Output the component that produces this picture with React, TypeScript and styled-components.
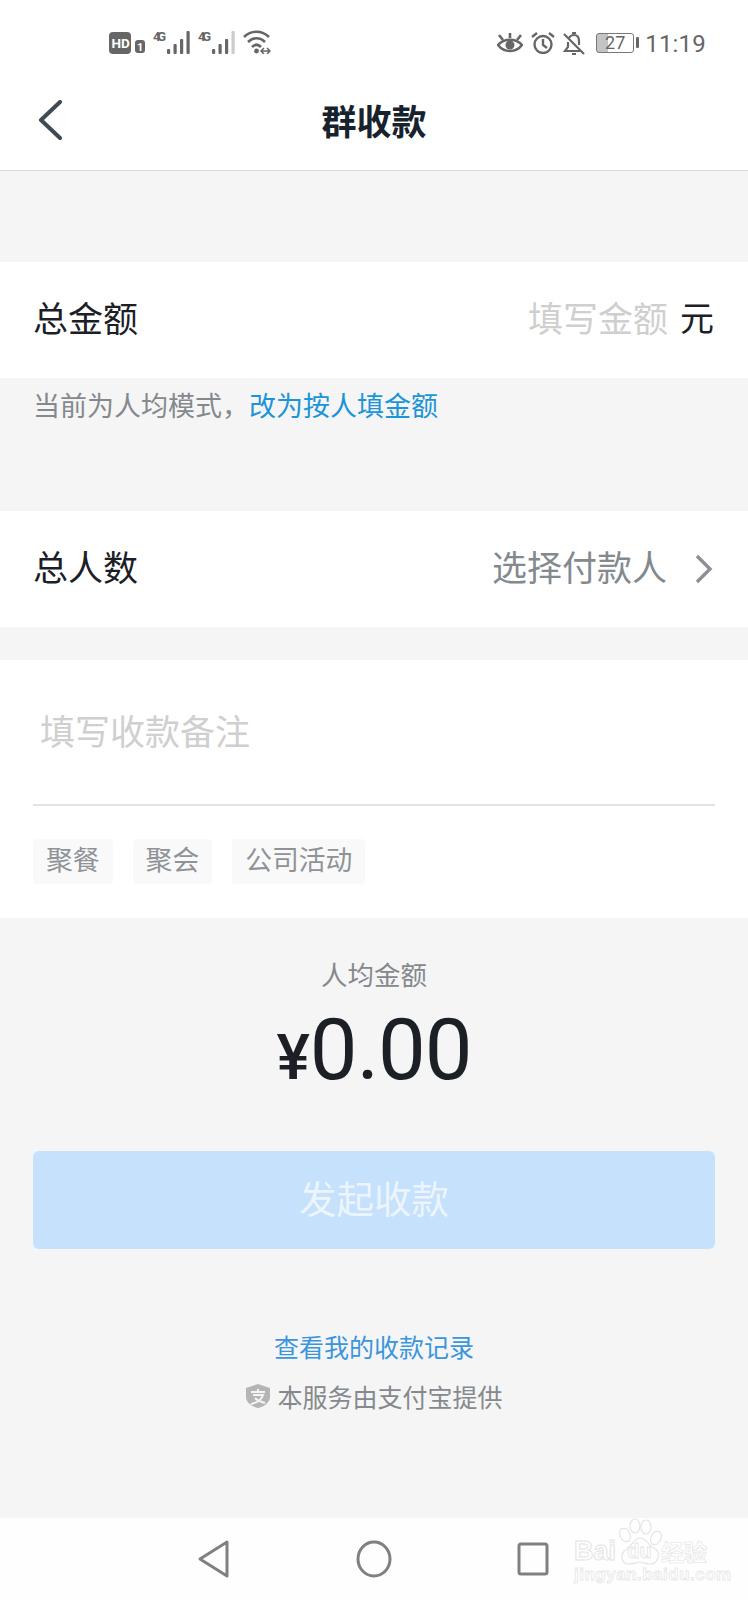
import React from "react";
import styled, { createGlobalStyle } from "styled-components";

const GlobalStyle = createGlobalStyle`
  html, body {
    margin: 0;
    padding: 0;
    background: #f5f5f5;
  }
  * {
    box-sizing: border-box;
  }
`;

const cjk = `"Noto Sans CJK SC", "Noto Sans", sans-serif`;

const Page = styled.div`
  width: 748px;
  height: 1600px;
  display: flex;
  flex-direction: column;
  background: #f5f5f5;
  font-family: ${cjk};
  color: #1c2026;
`;

const StatusBar = styled.div`
  height: 86px;
  background: #fff;
  display: flex;
  justify-content: space-between;
  padding: 30px 42px 0 109px;
`;

const StatusGroup = styled.div<{ $gap: number; $top?: number }>`
  display: flex;
  align-items: flex-start;
  gap: ${(p) => p.$gap}px;
  padding-top: ${(p) => p.$top ?? 0}px;
  color: #666;
`;

const Clock = styled.span`
  margin-top: -1px;
  font-family: Roboto, sans-serif;
  font-size: 24px;
  line-height: 26px;
  letter-spacing: 0.2px;
  color: #666;
`;

const Header = styled.div`
  height: 85px;
  background: #fff;
  border-bottom: 1px solid #d9d9d9;
  position: relative;
  display: flex;
  align-items: center;
  justify-content: center;
  padding-bottom: 16px;
`;

const BackButton = styled.svg`
  position: absolute;
  left: 37px;
  top: 14px;
`;

const Title = styled.h1`
  margin: 0;
  font-size: 35px;
  line-height: 48px;
  font-weight: 700;
  color: #17222c;
`;

const Row = styled.div<{ $top: number }>`
  margin-top: ${(p) => p.$top}px;
  height: 116px;
  background: #fff;
  display: flex;
  align-items: center;
  justify-content: space-between;
  padding: 0 34px 8px 33px;
`;

const RowLabel = styled.span`
  font-size: 35px;
  color: #1c2026;
`;

const RowRight = styled.div<{ $gap: number }>`
  display: flex;
  align-items: center;
  gap: ${(p) => p.$gap}px;
`;

const RowValue = styled.span<{ $muted?: boolean }>`
  font-size: 35px;
  color: ${(p) => (p.$muted ? "#84898e" : "#cfcfcf")};
`;

const Unit = styled.span`
  font-size: 34px;
  color: #1c2026;
`;

const Chevron = styled.svg`
  margin-top: 8px;
`;

const Hint = styled.div`
  height: 60px;
  display: flex;
  align-items: center;
  padding: 0 0 8px 33px;
  font-size: 27px;
  color: #85898d;
`;

const HintLink = styled.span`
  color: #1c94d8;
`;

const NoteCard = styled.div`
  margin-top: 33px;
  height: 258px;
  background: #fff;
  padding: 0 33px;
`;

const NoteInput = styled.div`
  height: 146px;
  border-bottom: 2px solid #e3e3e3;
  padding: 45px 7px 0;
  font-size: 35px;
  line-height: 50px;
  color: #cfcfcf;
`;

const Chips = styled.div`
  display: flex;
  gap: 20px;
  margin-top: 33px;
`;

const Chip = styled.span`
  height: 45px;
  padding: 0 13px;
  background: #f9f9f9;
  border-radius: 4px;
  font-size: 26.8px;
  line-height: 39px;
  color: #8f9397;
`;

const Summary = styled.div`
  display: flex;
  flex-direction: column;
  align-items: center;
  padding-top: 36px;
`;

const SummaryLabel = styled.div`
  font-size: 26.5px;
  line-height: 40px;
  color: #85898d;
`;

const Amount = styled.div`
  margin-top: 11px;
  height: 90px;
  display: flex;
  align-items: baseline;
  font-family: Roboto, sans-serif;
  font-size: 85px;
  line-height: 90px;
  letter-spacing: -1px;
  color: #1c2026;
`;

const Yen = styled.span`
  font-size: 63px;
  font-weight: 500;
  margin-right: 1px;
`;

const SubmitButton = styled.button`
  margin: 56px 33px 0;
  align-self: stretch;
  height: 98px;
  border: none;
  border-radius: 6px;
  background: #c5e1fb;
  font-family: ${cjk};
  font-size: 37.5px;
  padding: 0 0 8px;
  color: #ecf5fd;
`;

const RecordLink = styled.div`
  margin-top: 77px;
  font-size: 25px;
  line-height: 40px;
  color: #3b95dd;
`;

const Provider = styled.div`
  margin-top: 10px;
  display: flex;
  align-items: center;
  gap: 6px;
  font-size: 25px;
  line-height: 40px;
  color: #85898d;
`;

const NavBar = styled.div`
  margin-top: auto;
  height: 82px;
  background: #fefefe;
  position: relative;
  display: flex;
  align-items: center;
  padding: 0 0 0 198px;
`;

const NavSlot = styled.div<{ $width: number }>`
  width: ${(p) => p.$width}px;
  display: flex;
`;

const Watermark = styled.div`
  position: absolute;
  left: 574px;
  top: 0;
  width: 136px;
  color: #fff;
  font-family: "Liberation Sans", sans-serif;
`;

const WatermarkPaw = styled.svg`
  position: absolute;
  left: 44px;
  top: 0;
`;

const WatermarkBrand = styled.div`
  position: relative;
  display: flex;
  align-items: center;
  margin-top: 19px;
  height: 28px;
  font-size: 27px;
  line-height: 28px;
  font-weight: 700;
  -webkit-text-stroke: 1px #e4e4e4;
`;

const WatermarkDu = styled.span`
  width: 41px;
  margin-left: 3px;
  font-size: 20px;
  text-align: center;
  -webkit-text-stroke: 0.8px #e4e4e4;
`;

const WatermarkCn = styled.span`
  font-family: ${cjk};
  font-size: 23px;
  margin-left: 1px;
  -webkit-text-stroke: 0.6px #e4e4e4;
`;

const WatermarkUrl = styled.div`
  margin-top: 0;
  font-size: 17px;
  line-height: 20px;
  letter-spacing: 0.5px;
  font-weight: 700;
  white-space: nowrap;
  color: #fff;
  -webkit-text-stroke: 0.8px #e8e8e8;
`;

const HdIcon = () => (
  <svg width="36" height="24" viewBox="0 0 36 24">
    <rect x="0" y="2" width="22" height="22" rx="4" fill="#666" />
    <text x="2.5" y="18" fontFamily="Roboto, sans-serif" fontSize="13.5" fontWeight="700" fill="#fff">
      HD
    </text>
    <rect x="26" y="10" width="10" height="13" rx="3" fill="#666" />
    <text x="28" y="21" fontFamily="Roboto, sans-serif" fontSize="11" fontWeight="700" fill="#fff">
      1
    </text>
  </svg>
);

const Signal = ({ faded }: { faded?: boolean }) => (
  <svg width="37" height="24" viewBox="0 0 37 24">
    <text x="0" y="11" fontFamily="Roboto, sans-serif" fontSize="13" fontWeight="700" fill="#666" textLength="13">
      4G
    </text>
    <rect x="14" y="19" width="3.2" height="5" rx="1" fill="#666" />
    <rect x="20.5" y="14" width="3.2" height="10" rx="1" fill="#666" />
    <rect x="27" y="9" width="3.2" height="15" rx="1" fill="#666" />
    <rect x="33.5" y="1" width="3.2" height="23" rx="1" fill={faded ? "#ccc" : "#666"} />
  </svg>
);

const WifiIcon = () => (
  <svg width="28" height="24" viewBox="0 0 28 24" fill="none" stroke="#666" strokeWidth="2.6">
    <path d="M1 7 C8 0 19 0 26 7" />
    <path d="M5 12 C10 7 17 7 22 12" />
    <path d="M9 17 C12 14 15 14 18 17" />
    <circle cx="13.5" cy="21" r="2.4" fill="#666" stroke="none" />
    <path d="M18 21h9M21 18l-3 3 3 3M24 18l3 3-3 3" strokeWidth="1.5" />
  </svg>
);

const EyeIcon = () => (
  <svg width="26" height="22" viewBox="0 0 26 22" fill="none" stroke="#666" strokeWidth="2.6">
    <path d="M1 13 C7 6 19 6 25 13 C19 21 7 21 1 13 Z" />
    <circle cx="13" cy="13" r="4.5" fill="#666" stroke="none" />
    <path d="M2 3l4 5M13 1v5M24 3l-4 5" />
  </svg>
);

const AlarmIcon = () => (
  <svg width="24" height="22" viewBox="0 0 24 22" fill="none" stroke="#666" strokeWidth="2.4">
    <circle cx="12" cy="12.5" r="8.5" />
    <path d="M12 7v6l4 3M1 5l5-4M23 5l-5-4" />
  </svg>
);

const BellOffIcon = () => (
  <svg width="22" height="24" viewBox="0 0 22 24" fill="none" stroke="#666" strokeWidth="2.2">
    <path d="M6 6 C7 4 9 3 11 3 C14 3 16 5 16 9 V13 M5 10 V15 L2 19 H17" />
    <path d="M9 22h4M9 1h4M1 2l20 20" />
  </svg>
);

const BatteryBox = styled.div`
  width: 38px;
  height: 20px;
  margin: 1px 3px 0 3px;
  border: 1.5px solid #777;
  border-radius: 3px;
  position: relative;
  font-family: Roboto, sans-serif;
  font-size: 18px;
  line-height: 17px;
  text-align: center;
  color: #666;
  background: linear-gradient(90deg, #c4c4c4 0 30%, transparent 30%);
  &::after {
    content: "";
    position: absolute;
    right: -6px;
    top: 3px;
    width: 3px;
    height: 11px;
    border-radius: 1px;
    background: #666;
  }
`;

const AlipayShield = () => (
  <svg width="26" height="26" viewBox="0 0 26 26">
    <path d="M13 1 L25 5 V14 C25 20 18 24 13 25 C8 24 1 20 1 14 V5 Z" fill="#b5b5b5" />
    <path d="M6 9h14M13 6v4M8 12h10C16 18 11 20 6 21M10 15c3 3 6 4 10 5" fill="none" stroke="#f5f5f5" strokeWidth="2" />
  </svg>
);

const App: React.FC = () => {
  return (
    <>
      <GlobalStyle />
      <Page>
        <StatusBar>
          <StatusGroup $gap={8}>
            <HdIcon />
            <Signal />
            <Signal faded />
            <WifiIcon />
          </StatusGroup>
          <StatusGroup $gap={8} $top={2}>
            <EyeIcon />
            <AlarmIcon />
            <BellOffIcon />
            <BatteryBox>27</BatteryBox>
            <Clock>11:19</Clock>
          </StatusGroup>
        </StatusBar>
        <Header>
          <BackButton width="26" height="40" viewBox="0 0 26 40" fill="none" stroke="#3f4a52" strokeWidth="4" strokeLinecap="round" strokeLinejoin="round">
            <path d="M23 2 L4 20 L23 38" />
          </BackButton>
          <Title>群收款</Title>
        </Header>
        <Row $top={91}>
          <RowLabel>总金额</RowLabel>
          <RowRight $gap={12}>
            <RowValue>填写金额</RowValue>
            <Unit>元</Unit>
          </RowRight>
        </Row>
        <Hint>
          当前为人均模式，<HintLink>改为按人填金额</HintLink>
        </Hint>
        <Row $top={73}>
          <RowLabel>总人数</RowLabel>
          <RowRight $gap={27}>
            <RowValue $muted>选择付款人</RowValue>
            <Chevron width="20" height="30" viewBox="0 0 20 30" fill="none" stroke="#8c9094" strokeWidth="3.4">
              <path d="M3 2 L16 15 L3 28" />
            </Chevron>
          </RowRight>
        </Row>
        <NoteCard>
          <NoteInput>填写收款备注</NoteInput>
          <Chips>
            <Chip>聚餐</Chip>
            <Chip>聚会</Chip>
            <Chip>公司活动</Chip>
          </Chips>
        </NoteCard>
        <Summary>
          <SummaryLabel>人均金额</SummaryLabel>
          <Amount>
            <Yen>¥</Yen>0.00
          </Amount>
          <SubmitButton>发起收款</SubmitButton>
          <RecordLink>查看我的收款记录</RecordLink>
          <Provider>
            <AlipayShield />
            本服务由支付宝提供
          </Provider>
        </Summary>
        <NavBar>
          <NavSlot $width={158}>
            <svg width="32" height="38" viewBox="0 0 32 38" fill="none" stroke="#808080" strokeWidth="3" strokeLinejoin="round">
              <path d="M29 2 V36 L2 19 Z" />
            </svg>
          </NavSlot>
          <NavSlot $width={161}>
            <svg width="36" height="38" viewBox="0 0 36 38" fill="none" stroke="#808080" strokeWidth="3">
              <ellipse cx="18" cy="19" rx="16" ry="17" />
            </svg>
          </NavSlot>
          <NavSlot $width={32}>
            <svg width="32" height="34" viewBox="0 0 32 34" fill="none" stroke="#808080" strokeWidth="3" strokeLinejoin="round">
              <rect x="2" y="2" width="28" height="30" rx="2" />
            </svg>
          </NavSlot>
          <Watermark>
            <WatermarkPaw width="46" height="48" viewBox="0 0 46 48" fill="#fff" stroke="#e4e4e4" strokeWidth="1.2">
              <ellipse cx="7" cy="17" rx="5" ry="7" transform="rotate(-25 7 17)" />
              <ellipse cx="17" cy="8" rx="5" ry="7" />
              <ellipse cx="28" cy="9" rx="5" ry="7" />
              <ellipse cx="38" cy="20" rx="5" ry="7" transform="rotate(25 38 20)" />
              <path d="M22 20 C28 20 30 27 36 30 C44 35 40 46 32 46 C27 46 25 44 22 44 C19 44 16 46 11 46 C3 46 1 36 9 31 C15 27 16 20 22 20 Z" />
            </WatermarkPaw>
            <WatermarkBrand>
              Bai
              <WatermarkDu>du</WatermarkDu>
              <WatermarkCn>经验</WatermarkCn>
            </WatermarkBrand>
            <WatermarkUrl>jingyan.baidu.com</WatermarkUrl>
          </Watermark>
        </NavBar>
      </Page>
    </>
  );
};

export default App;
